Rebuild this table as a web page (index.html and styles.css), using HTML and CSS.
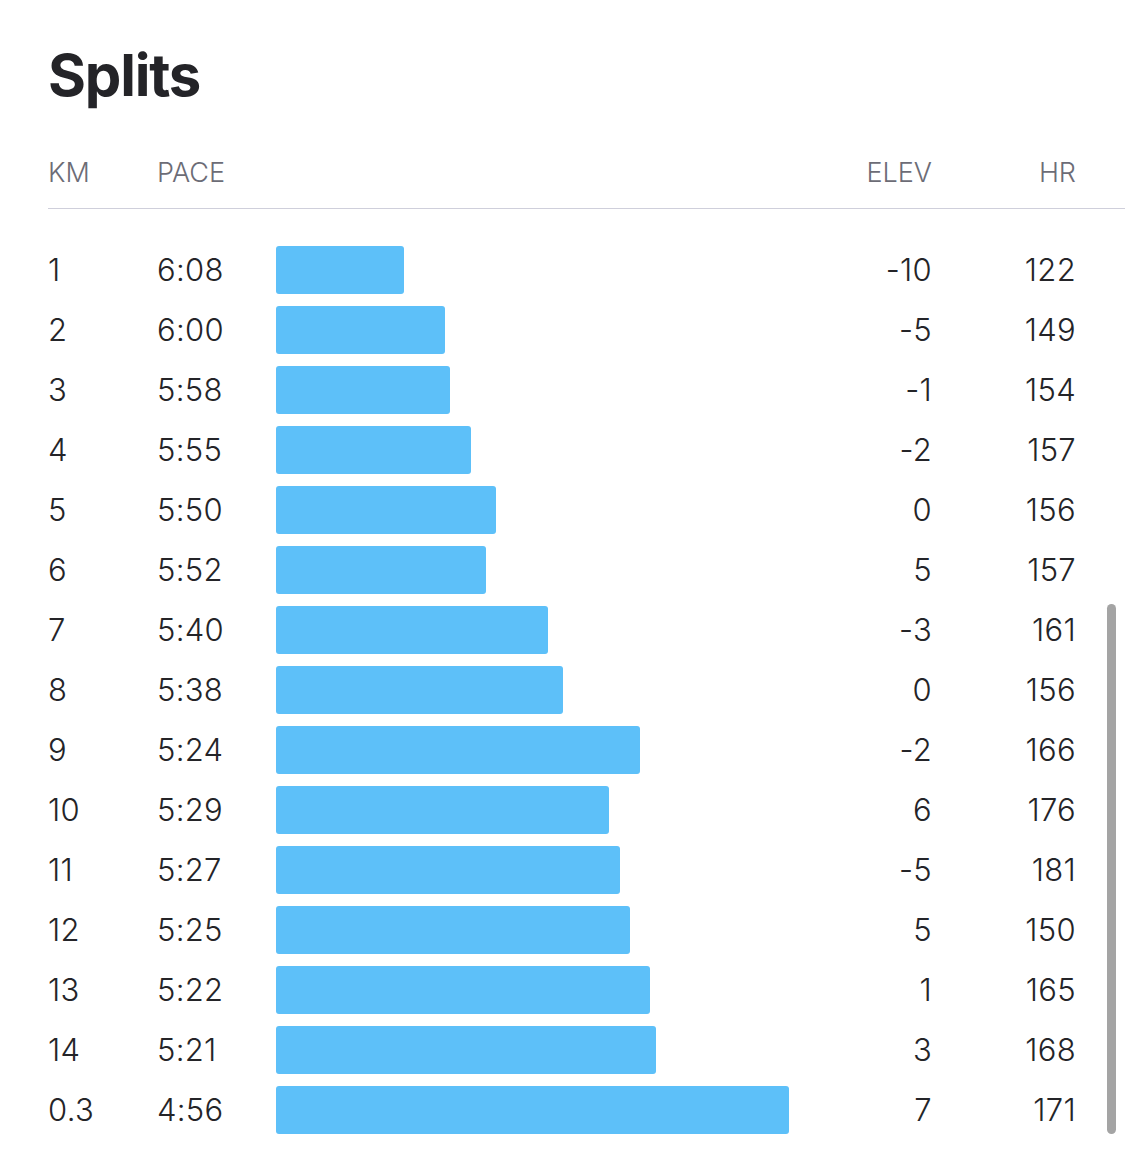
FILE: index.html
```html
<!DOCTYPE html>
<html>
<head>
<meta charset="utf-8">
<link rel="stylesheet" href="styles.css">
</head>
<body>
<main class="panel">
  <h1 class="title">Splits</h1>
  <div class="row head">
    <div class="c-km">KM</div>
    <div class="c-pace">PACE</div>
    <div class="c-bar"></div>
    <div class="c-elev">ELEV</div>
    <div class="c-hr">HR</div>
  </div>
  <div class="rows">
    <div class="row"><div class="c-km">1</div><div class="c-pace">6:08</div><div class="c-bar"><span class="bar" style="width:128px"></span></div><div class="c-elev">-10</div><div class="c-hr">122</div></div>
    <div class="row"><div class="c-km">2</div><div class="c-pace">6:00</div><div class="c-bar"><span class="bar" style="width:169px"></span></div><div class="c-elev">-5</div><div class="c-hr">149</div></div>
    <div class="row"><div class="c-km">3</div><div class="c-pace">5:58</div><div class="c-bar"><span class="bar" style="width:174px"></span></div><div class="c-elev">-1</div><div class="c-hr">154</div></div>
    <div class="row"><div class="c-km">4</div><div class="c-pace">5:55</div><div class="c-bar"><span class="bar" style="width:195px"></span></div><div class="c-elev">-2</div><div class="c-hr">157</div></div>
    <div class="row"><div class="c-km">5</div><div class="c-pace">5:50</div><div class="c-bar"><span class="bar" style="width:220px"></span></div><div class="c-elev">0</div><div class="c-hr">156</div></div>
    <div class="row"><div class="c-km">6</div><div class="c-pace">5:52</div><div class="c-bar"><span class="bar" style="width:210px"></span></div><div class="c-elev">5</div><div class="c-hr">157</div></div>
    <div class="row"><div class="c-km">7</div><div class="c-pace">5:40</div><div class="c-bar"><span class="bar" style="width:272px"></span></div><div class="c-elev">-3</div><div class="c-hr">161</div></div>
    <div class="row"><div class="c-km">8</div><div class="c-pace">5:38</div><div class="c-bar"><span class="bar" style="width:287px"></span></div><div class="c-elev">0</div><div class="c-hr">156</div></div>
    <div class="row"><div class="c-km">9</div><div class="c-pace">5:24</div><div class="c-bar"><span class="bar" style="width:364px"></span></div><div class="c-elev">-2</div><div class="c-hr">166</div></div>
    <div class="row"><div class="c-km">10</div><div class="c-pace">5:29</div><div class="c-bar"><span class="bar" style="width:333px"></span></div><div class="c-elev">6</div><div class="c-hr">176</div></div>
    <div class="row"><div class="c-km">11</div><div class="c-pace">5:27</div><div class="c-bar"><span class="bar" style="width:344px"></span></div><div class="c-elev">-5</div><div class="c-hr">181</div></div>
    <div class="row"><div class="c-km">12</div><div class="c-pace">5:25</div><div class="c-bar"><span class="bar" style="width:354px"></span></div><div class="c-elev">5</div><div class="c-hr">150</div></div>
    <div class="row"><div class="c-km">13</div><div class="c-pace">5:22</div><div class="c-bar"><span class="bar" style="width:374px"></span></div><div class="c-elev">1</div><div class="c-hr">165</div></div>
    <div class="row"><div class="c-km">14</div><div class="c-pace">5:21</div><div class="c-bar"><span class="bar" style="width:380px"></span></div><div class="c-elev">3</div><div class="c-hr">168</div></div>
    <div class="row"><div class="c-km">0.3</div><div class="c-pace">4:56</div><div class="c-bar"><span class="bar" style="width:513px"></span></div><div class="c-elev">7</div><div class="c-hr">171</div></div>
  </div>
  <div class="scroll-thumb"></div>
</main>
</body>
</html>
```
FILE: styles.css
```css
* { box-sizing: border-box; }
html, body {
  margin: 0;
  padding: 0;
  background: #ffffff;
}
body {
  font-family: "Inter", "Liberation Sans", sans-serif;
  color: #242428;
  width: 1125px;
  height: 1167px;
  overflow: hidden;
}
.panel {
  position: relative;
  padding: 40px 0 0 48px;
}
.title {
  margin: 0;
  font-size: 58px;
  line-height: 70px;
  font-weight: 700;
  letter-spacing: -1.2px;
  color: #242428;
}
.row {
  display: grid;
  grid-template-columns: 109px 119px 1fr 100px 144px;
  align-items: center;
  padding-right: 49px;
}
.head {
  margin-top: 45px;
  height: 36px;
  box-sizing: content-box;
  padding-bottom: 17px;
  border-bottom: 1px solid #cfcfdb;
  font-size: 27px;
  line-height: 36px;
  font-weight: 300;
  color: #6c6c76;
}
.rows {
  padding-top: 31px;
}
.rows .row {
  height: 60px;
  font-size: 31px;
  line-height: 60px;
  font-weight: 300;
  letter-spacing: 0.3px;
}
.c-elev, .c-hr { text-align: right; }
.c-bar {
  display: flex;
  align-items: center;
  height: 100%;
}
.bar {
  display: block;
  height: 48px;
  background: #5dc0f9;
  border-radius: 3px;
}
.scroll-thumb {
  position: absolute;
  left: 1107px;
  top: 604px;
  width: 9px;
  height: 530px;
  border-radius: 5px;
  background: #a4a4a4;
}
```
